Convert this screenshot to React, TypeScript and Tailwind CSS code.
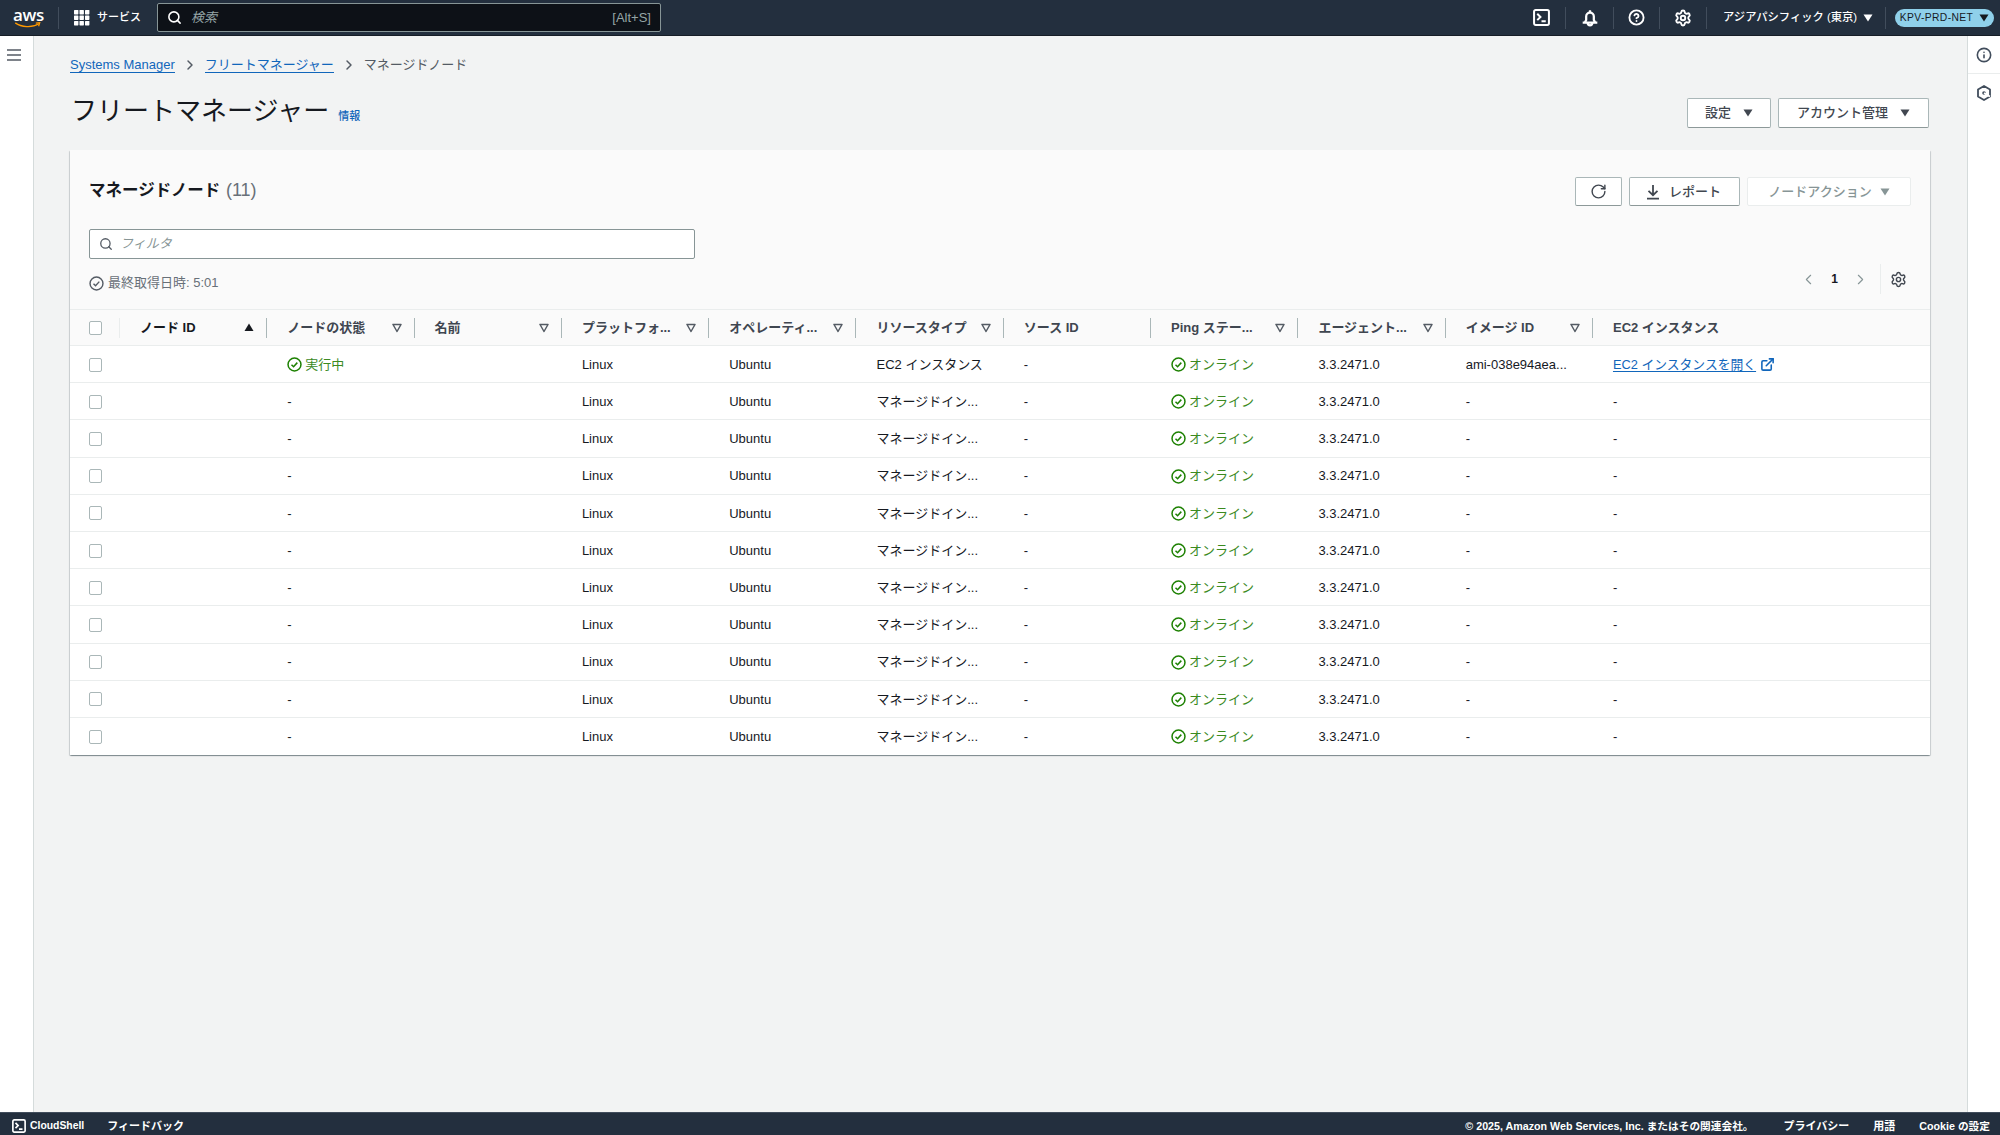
import React from "react";
import { ChevronLeft, ChevronRight, CircleHelp, ExternalLink, Info, RotateCw, Search, Settings } from "lucide-react";

const FONT = "font-['Liberation_Sans','Noto_Sans_CJK_JP',sans-serif]";

function Caret({ className = "" }: { className?: string }) {
  return (
    <svg viewBox="0 0 10 8" className={`w-[10px] h-[8px] ${className}`}>
      <path d="M0.5 0.5h9L5 7.5z" fill="currentColor" />
    </svg>
  );
}

function FilterCaret() {
  return (
    <svg viewBox="0 0 10 10" className="w-[10px] h-[10px] text-[#545b64]">
      <path d="M1 1.5h8L5 8.5z" fill="none" stroke="currentColor" strokeWidth="1.5" strokeLinejoin="round" />
    </svg>
  );
}

function SortCaret() {
  return (
    <svg viewBox="0 0 10 8" className="w-[10px] h-[8px] text-[#16191f]">
      <path d="M0.5 8L5 0.5 9.5 8z" fill="currentColor" />
    </svg>
  );
}

function StatusOk() {
  return (
    <svg viewBox="0 0 16 16" className="w-[15px] h-[15px] shrink-0 text-[#1d8102]">
      <circle cx="8" cy="8" r="6.9" fill="none" stroke="currentColor" strokeWidth="1.6" />
      <path d="M4.8 8.2l2.2 2.2 4-4.4" fill="none" stroke="currentColor" strokeWidth="1.6" />
    </svg>
  );
}

function Term({ size = 17 }: { size?: number }) {
  return (
    <svg viewBox="0 0 16 16" width={size} height={size} className="shrink-0">
      <rect x="1" y="1" width="14" height="14" rx="1.5" fill="none" stroke="#fff" strokeWidth="1.9" />
      <path d="M4 4.5L7 7.5 4 10.5M8 11.5h4" fill="none" stroke="#fff" strokeWidth="1.9" />
    </svg>
  );
}

function BellIcon() {
  return (
    <svg viewBox="0 0 16 16" className="w-[18px] h-[18px]" fill="none" stroke="#fff" strokeWidth="2">
      <path d="M1.5 12.2h13M3.2 12.2L4.6 9.8V6.6a3.4 3.4 0 0 1 6.8 0v3.2l1.4 2.4" />
      <path d="M6 12.5a2 2 0 0 0 4 0M8 1v2" />
    </svg>
  );
}

function DownloadIcon() {
  return (
    <svg viewBox="0 0 16 16" className="w-[16px] h-[16px]" fill="none" stroke="currentColor" strokeWidth="1.8">
      <path d="M8 1v10M3.5 6.8L8 11.2l4.5-4.4M2 14.6h12" />
    </svg>
  );
}

function Divider() {
  return <span className="w-px h-[22px] bg-[#414d5c]" />;
}

function Outline({ children, className = "" }: { children: React.ReactNode; className?: string }) {
  return (
    <button className={`flex items-center justify-center rounded-[2px] border border-[#aab7b8] border-b-[#8d9999] bg-white text-[#414750] text-[13px] font-medium ${className}`}>
      {children}
    </button>
  );
}

function Checkbox() {
  return <span className="block w-[13px] h-[14px] rounded-[2px] border border-[#aab7b8] bg-white" />;
}

const headers: [string, "sort" | "filter" | "none"][] = [
  ["ノード ID", "sort"],
  ["ノードの状態", "filter"],
  ["名前", "filter"],
  ["プラットフォ...", "filter"],
  ["オペレーティ...", "filter"],
  ["リソースタイプ", "filter"],
  ["ソース ID", "none"],
  ["Ping ステー...", "filter"],
  ["エージェント...", "filter"],
  ["イメージ ID", "filter"],
  ["EC2 インスタンス", "none"],
];

const GRID = "grid grid-cols-[50px_repeat(10,147.3px)_1fr]";
const rowIds = Array.from({ length: 11 }, (_, i) => i);

function Cell({ children, className = "" }: { children?: React.ReactNode; className?: string }) {
  return <div className={`pl-[20px] pt-[1px] flex items-center min-w-0 whitespace-nowrap ${className}`}>{children}</div>;
}

function Online() {
  return (
    <span className="flex items-center gap-[3px] text-[#3b8a1f]">
      <StatusOk />
      <span>オンライン</span>
    </span>
  );
}

function Row({ i }: { i: number }) {
  const first = i === 0;
  return (
    <div className={`${GRID} h-[37.2px] border-b border-[#eaeded] last:border-b-0 text-[13px] text-[#16191f]`}>
      <div className="flex items-center pl-[19px] pt-[1px]"><Checkbox /></div>
      <Cell />
      <Cell>
        {first ? (
          <span className="flex items-center gap-[3px] text-[#3b8a1f]"><StatusOk /><span>実行中</span></span>
        ) : "-"}
      </Cell>
      <Cell />
      <Cell>Linux</Cell>
      <Cell>Ubuntu</Cell>
      <Cell>{first ? "EC2 インスタンス" : "マネージドイン..."}</Cell>
      <Cell>-</Cell>
      <Cell><Online /></Cell>
      <Cell>3.3.2471.0</Cell>
      <Cell>{first ? "ami-038e94aea..." : "-"}</Cell>
      <Cell>
        {first ? (
          <span className="flex items-center gap-[4px] text-[#1166bb] text-[12.8px]">
            <span className="underline underline-offset-2">EC2 インスタンスを開く</span>
            <ExternalLink size={15} strokeWidth={2.5} />
          </span>
        ) : "-"}
      </Cell>
    </div>
  );
}

export default function App() {
  return (
    <div className={`${FONT} h-[1135px] flex flex-col overflow-hidden bg-[#f2f3f3] text-[#16191f]`}>
      <header className="h-9 shrink-0 bg-[#232f3e] flex items-center text-white border-b border-[#161d26]">
        <div className="w-[58px] pl-[13px] flex flex-col items-start leading-none">
          <span className="text-[17px] font-semibold leading-[15px] tracking-[-0.3px] font-['Open_Sans',sans-serif]">aws</span>
          <svg viewBox="0 0 30 8" className="w-[29px] h-[7px]">
            <path d="M1 1c7 5 19 6 27 1" fill="none" stroke="#ff9900" strokeWidth="1.6" />
            <path d="M24.5 1.2l4.5-.4-1.3 4" fill="none" stroke="#ff9900" strokeWidth="1.4" />
          </svg>
        </div>
        <span className="w-px h-[22px] bg-[#414d5c]" />
        <div className="ml-[15px] flex items-center gap-[7px] w-[83px]">
          <svg viewBox="0 0 16 16" className="w-[16px] h-[16px]" fill="#fff">
            {[0, 5.5, 11].flatMap((y) => [0, 5.5, 11].map((x) => <rect key={`${x}-${y}`} x={x} y={y} width="4.4" height="4.4" rx="0.6" />))}
          </svg>
          <span className="text-[11px] font-medium">サービス</span>
        </div>
        <div className="w-[504px] h-[29px] rounded-[2px] border border-[#879596] flex items-center px-[9px] bg-[#0d1117]">
          <Search size={15} strokeWidth={2.5} className="text-white" />
          <span className="ml-[9px] text-[13px] italic text-[#95a5a6]">検索</span>
          <span className="ml-auto text-[13px] text-[#95a5a6]">[Alt+S]</span>
        </div>
        <div className="ml-auto flex items-center pr-[6px]">
          <span className="w-[48px] flex justify-center pl-[1px]"><Term /></span>
          <Divider />
          <span className="w-[47px] flex justify-center"><BellIcon /></span>
          <Divider />
          <span className="w-[45px] flex justify-center"><CircleHelp size={17} strokeWidth={2.6} /></span>
          <Divider />
          <span className="w-[46px] flex justify-center"><Settings size={18} strokeWidth={2.5} /></span>
          <Divider />
          <span className="pl-[16px] w-[178px] flex items-center gap-[6px] text-[11.3px] font-medium whitespace-nowrap">
            アジアパシフィック (東京)
            <Caret />
          </span>
          <Divider />
          <span className="ml-[9px] w-[99px] h-[18px] rounded-full bg-[#8fd0ea] text-[#16191f] text-[10.3px] tracking-[0.4px] flex items-center justify-center gap-[6px]">
            KPV-PRD-NET
            <Caret className="w-[8px] h-[6px]" />
          </span>
        </div>
      </header>

      <div className="flex-1 flex min-h-0">
        <aside className="w-[34px] shrink-0 bg-white border-r border-[#d5dbdb] pt-[13px] flex justify-center">
          <svg viewBox="0 0 14 12" className="w-[14px] h-[12px] ml-[-6px] text-[#545b64]">
            <path d="M0 1h14M0 6h14M0 11h14" stroke="currentColor" strokeWidth="1.6" />
          </svg>
        </aside>

        <main className="flex-1 min-w-0 pl-[36px] pr-[37px] pt-[20px]">
          <nav className="h-[18px] flex items-center text-[13px]">
            <a className="text-[#1166bb] border-b border-[#1166bb] leading-[15px]">Systems Manager</a>
            <ChevronRight size={16} strokeWidth={2.2} className="mx-[7px] text-[#545b64]" />
            <a className="text-[#1166bb] border-b border-[#1166bb] leading-[15px]">フリートマネージャー</a>
            <ChevronRight size={16} strokeWidth={2.2} className="mx-[7px] text-[#545b64]" />
            <span className="text-[#545b64]">マネージドノード</span>
          </nav>

          <div className="mt-[24px] flex justify-between h-[30px]">
            <div className="flex items-start pl-[1px]">
              <h1 className="text-[26px] leading-[26px] font-normal">フリートマネージャー</h1>
              <a className="ml-[9px] mt-[12px] text-[11px] leading-[12px] font-medium text-[#1166bb]">情報</a>
            </div>
            <div className="flex gap-[7px] mr-[1px]">
              <Outline className="w-[84px] gap-[12px]">設定<Caret /></Outline>
              <Outline className="w-[151px] gap-[12px]">アカウント管理<Caret /></Outline>
            </div>
          </div>

          <section className="mt-[22px] bg-white rounded-[1px] shadow-[0_1px_1px_0_rgba(0,28,36,0.3),1px_1px_1px_0_rgba(0,28,36,0.15),-1px_1px_1px_0_rgba(0,28,36,0.15)]">
            <div className="bg-[#fafafa] h-[159px] px-[19px] pt-[27px]">
              <div className="flex items-center justify-between h-[29px]">
                <h2 className="text-[16.5px] font-bold -mt-[3px]">
                  マネージドノード <span className="ml-[1px] font-normal text-[#687078] text-[18px]">(11)</span>
                </h2>
                <div className="flex gap-[7px]">
                  <Outline className="w-[47px] h-[29px]"><RotateCw size={17} strokeWidth={2} className="text-[#414750]" /></Outline>
                  <Outline className="w-[111px] h-[29px] gap-[8px] pr-[3px]"><DownloadIcon /><span>レポート</span></Outline>
                  <button className="w-[164px] h-[29px] rounded-[2px] border border-[#eaeded] bg-white text-[#879596] text-[13px] font-medium flex items-center justify-center gap-[8px]">
                    ノードアクション<Caret className="text-[#879596]" />
                  </button>
                </div>
              </div>
              <div className="mt-[23px] w-[606px] h-[30px] rounded-[2px] border border-[#879596] bg-white flex items-center pl-[9px]">
                <Search size={14} strokeWidth={2.2} className="text-[#545b64]" />
                <span className="ml-[7px] text-[13px] italic text-[#879596]">フィルタ</span>
              </div>
              <div className="mt-[8px] flex justify-between items-start">
                <div className="mt-[8px] h-[16px] flex items-center gap-[4px] text-[13px] text-[#687078]">
                  <svg viewBox="0 0 16 16" className="w-[15px] h-[15px] text-[#545b64]">
                    <circle cx="8" cy="8" r="6.9" fill="none" stroke="currentColor" strokeWidth="1.5" />
                    <path d="M4.8 8.2l2.2 2.2 4-4.4" fill="none" stroke="currentColor" strokeWidth="1.5" />
                  </svg>
                  最終取得日時: 5:01
                </div>
                <div className="h-[24px] flex items-center">
                  <ChevronLeft size={17} strokeWidth={1.6} className="text-[#879596]" />
                  <span className="w-[35px] text-center text-[12px] font-bold">1</span>
                  <ChevronRight size={17} strokeWidth={1.6} className="text-[#879596]" />
                  <span className="ml-[11px] w-px h-[30px] bg-[#eaeded]" />
                  <Settings size={17} strokeWidth={2} className="ml-[9px] mr-[4px] text-[#414750]" />
                </div>
              </div>
            </div>

            <div className={`${GRID} h-[37px] bg-[#fafafa] border-y border-[#eaeded] text-[13px] font-bold text-[#3f4650]`}>
              <div className="flex items-center pl-[19px] relative">
                <Checkbox />
                <span className="absolute right-0 top-[8px] w-px h-[20px] bg-[#eaeded]" />
              </div>
              {headers.map(([t, kind], idx) => (
                <div key={t} className={`pl-[20px] flex items-center relative ${idx === 0 ? "text-[#16191f]" : ""}`}>
                  <span className="whitespace-nowrap">{t}</span>
                  {kind === "sort" && <span className="absolute right-[13px] top-[13px]"><SortCaret /></span>}
                  {kind === "filter" && <span className="absolute right-[13px] top-[13px]"><FilterCaret /></span>}
                  {idx < 10 && <span className="absolute right-0 top-[8px] w-px h-[20px] bg-[#aab7b8]" />}
                </div>
              ))}
            </div>

            <div className="bg-white">
              {rowIds.map((i) => <Row key={i} i={i} />)}
            </div>
          </section>
        </main>

        <aside className="w-[33px] shrink-0 bg-white border-l border-[#d5dbdb] flex flex-col items-center">
          <div className="h-[38px] w-full border-b border-[#eaeded] flex items-center justify-center pt-[1px]">
            <Info size={16} strokeWidth={2.4} className="text-[#414d5c]" />
          </div>
          <div className="pt-[11px]">
            <svg viewBox="0 0 16 16" className="w-[16px] h-[16px] text-[#414d5c]">
              <path d="M8 1l6 3.5v7L8 15l-6-3.5v-7z" fill="none" stroke="currentColor" strokeWidth="1.8" strokeLinejoin="round" />
              <circle cx="8" cy="8" r="1.8" fill="currentColor" />
              <path d="M8 8l6 3.5" stroke="#fff" strokeWidth="1.6" />
            </svg>
          </div>
        </aside>
      </div>

      <footer className="h-[23px] shrink-0 bg-[#232f3e] border-t border-[#414d5c] text-white text-[11px] font-semibold flex items-center pt-[4px]">
        <span className="ml-[12px]"><Term size={14} /></span>
        <span className="ml-[4px] text-[10.4px]">CloudShell</span>
        <span className="ml-[23px]">フィードバック</span>
        <span className="ml-auto text-[10.7px]">© 2025, Amazon Web Services, Inc. またはその関連会社。</span>
        <span className="ml-[30px]">プライバシー</span>
        <span className="ml-[24px]">用語</span>
        <span className="ml-[24px] mr-[10px] text-[10.7px]">Cookie の設定</span>
      </footer>
    </div>
  );
}
